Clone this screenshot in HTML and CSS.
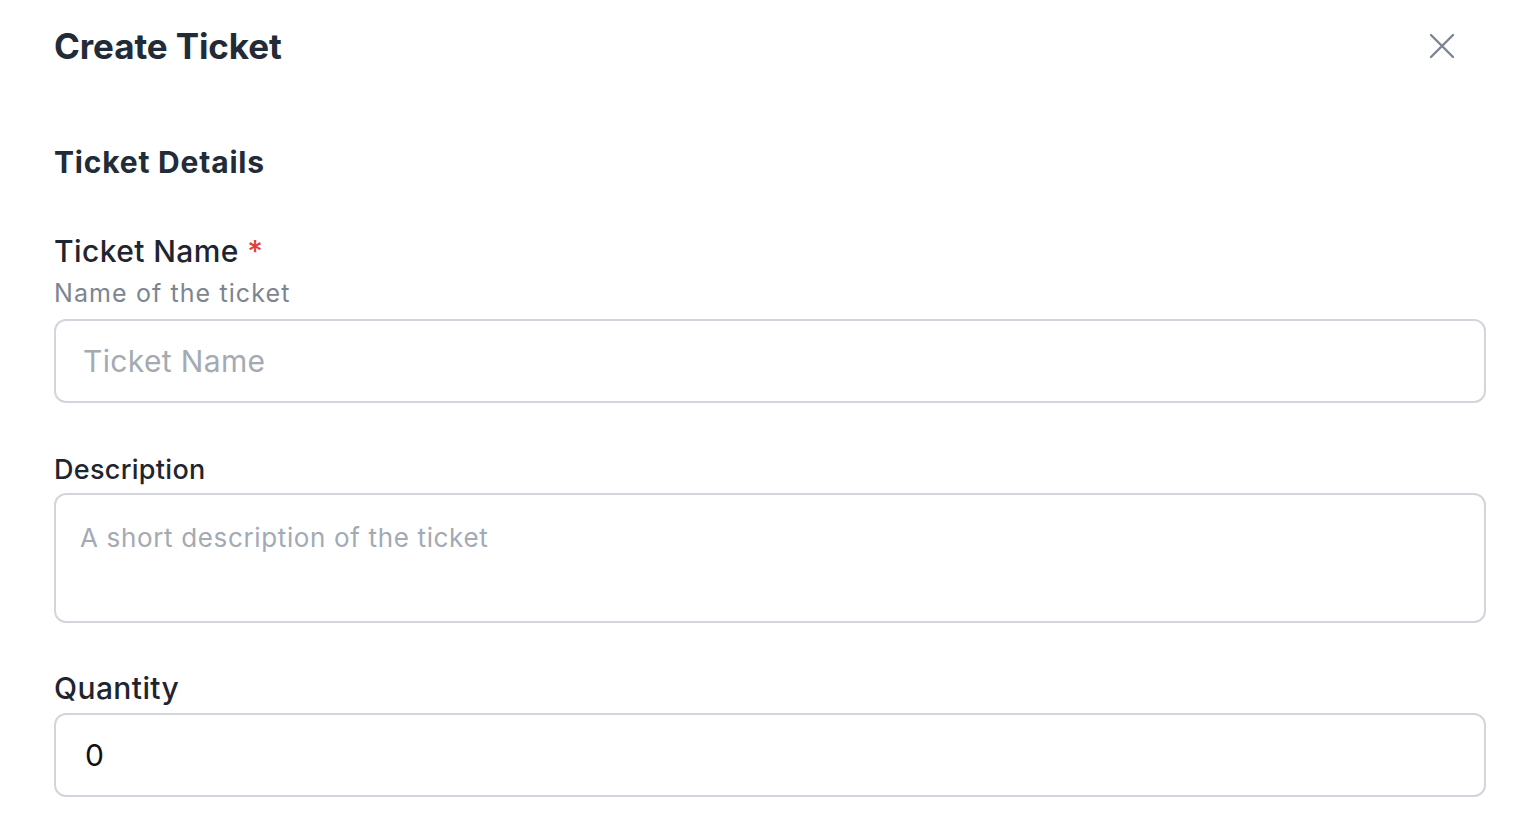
FILE: index.html
```html
<!DOCTYPE html>
<html>
<head>
<meta charset="utf-8">
<link rel="stylesheet" href="styles.css">
</head>
<body>
<div class="modal">
  <header class="modal-header">
    <h1 class="title">Create Ticket</h1>
    <button class="close" aria-label="Close">
      <svg width="26" height="26" viewBox="0 0 26 26"><path d="M2 2 L24 24 M24 2 L2 24" stroke="#7b8592" stroke-width="2.4" stroke-linecap="round" fill="none"/></svg>
    </button>
  </header>
  <section class="section">
    <h2 class="section-title">Ticket Details</h2>
    <div class="field field-name">
      <label class="label label-lg">Ticket Name <span class="req">*</span></label>
      <div class="helper">Name of the ticket</div>
      <input class="input" type="text" placeholder="Ticket Name">
    </div>
    <div class="field field-desc">
      <label class="label label-md">Description</label>
      <textarea class="textarea" placeholder="A short description of the ticket"></textarea>
    </div>
    <div class="field field-qty">
      <label class="label label-lg">Quantity</label>
      <input class="input" type="text" value="0">
    </div>
  </section>
</div>
</body>
</html>
```

FILE: styles.css
```css
html, body {
  margin: 0;
  padding: 0;
  background: #ffffff;
  font-family: Inter, "Noto Sans", sans-serif;
  color: #1f2833;
}
.modal {
  padding: 0 30px 0 54px;
}
.modal-header {
  display: flex;
  align-items: center;
  justify-content: space-between;
  height: 92px;
  padding-right: 31px;
}
.title {
  margin: 0;
  font-size: 35px;
  font-weight: 700;
  color: #222c38;
  letter-spacing: -0.1px;
}
.close {
  border: 0;
  background: none;
  padding: 0;
  width: 26px;
  height: 26px;
  display: flex;
}
.section {
  padding-top: 48px;
}
.section-title {
  margin: 0;
  font-size: 30px;
  font-weight: 700;
  color: #222c38;
  line-height: 44px;
  letter-spacing: 0.8px;
}
.field {
  display: flex;
  flex-direction: column;
}
.field-name {
  margin-top: 46px;
}
.label {
  color: #1f2530;
  font-weight: 500;
}
.label-lg {
  font-size: 30px;
  line-height: 42px;
  letter-spacing: 0.4px;
}
.label-md {
  font-size: 27px;
  line-height: 40px;
  letter-spacing: 0.3px;
}
.req {
  color: #e53e3e;
  letter-spacing: 0;
}
.helper {
  font-size: 25px;
  color: #7c8590;
  line-height: 34px;
  margin-top: 4px;
  margin-bottom: 9px;
  letter-spacing: 1.1px;
}
.input, .textarea {
  box-sizing: border-box;
  width: 100%;
  border: 2px solid #d2d6dc;
  border-radius: 12px;
  font-family: Inter, "Noto Sans", sans-serif;
  color: #111;
  background: #fff;
  outline: none;
}
.input {
  height: 84px;
  font-size: 30px;
  padding: 0 27px;
  letter-spacing: 0.35px;
}
.textarea {
  height: 130px;
  font-size: 26px;
  padding: 27px 24px 0;
  resize: none;
  margin-top: 3px;
  letter-spacing: 0.65px;
}
.input::placeholder, .textarea::placeholder {
  color: #a3aab4;
}
.field-desc {
  margin-top: 47px;
}
.field-qty {
  margin-top: 44px;
}
.field-qty .input {
  margin-top: 4px;
  padding-left: 29px;
}
```
